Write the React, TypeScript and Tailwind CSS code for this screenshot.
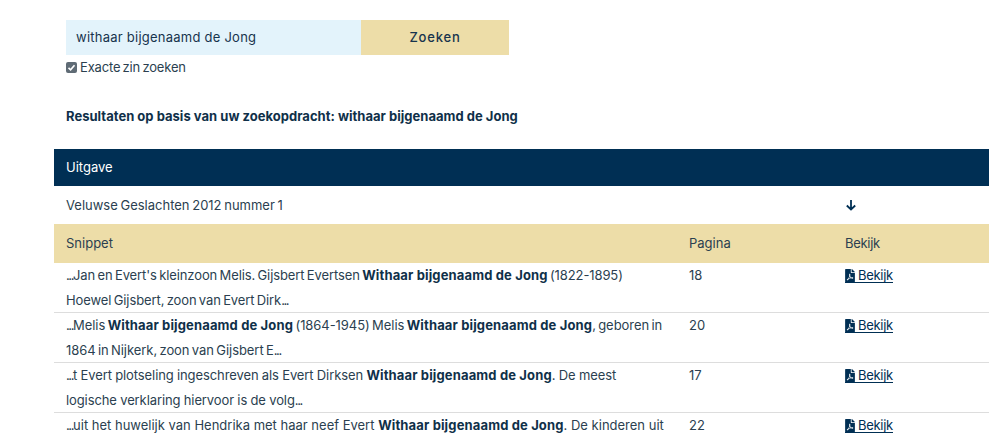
import React from "react";

const B = "Withaar bijgenaamd de Jong";

function Dots() {
  return <span className="tracking-[-1.4px]">...</span>;
}

function Name() {
  return <b className="font-bold text-[#0f3049] tracking-[0.14px] [word-spacing:0px]">{B}</b>;
}

function PdfIcon() {
  return (
    <svg viewBox="0 0 384 512" className="mr-[3px] h-[13px] w-[10px]" fill="#002f54">
      <path d="M181.9 256.1c-5-16-4.9-46.9-2-46.9 8.4 0 7.6 36.9 2 46.9zm-1.7 47.2c-7.7 20.2-17.3 43.3-28.4 62.7 18.3-7 39-17.2 62.9-21.9-12.7-9.6-24.9-23.4-34.5-40.8zM86.1 428.1c0 .8 13.2-5.4 34.9-40.2-6.7 6.3-29.1 24.5-34.9 40.2zM248 160h136v328c0 13.3-10.7 24-24 24H24c-13.3 0-24-10.7-24-24V24C0 10.7 10.7 0 24 0h200v136c0 13.2 10.8 24 24 24zm-8 171.8c-20-12.2-33.3-29-42.7-53.8 4.5-18.5 11.6-46.6 6.2-64.2-4.7-29.4-42.4-26.5-47.8-6.8-5 18.3-.4 44.1 8.1 77-11.6 27.6-28.7 64.6-40.8 85.8-.1 0-.1.1-.2.1-27.1 13.9-73.6 44.5-54.5 68 5.6 6.9 16 10 21.5 10 17.9 0 35.7-18 61.1-61.8 25.8-8.5 54.1-19.1 79-23.2 21.7 11.8 47.1 19.5 64 19.5 29.2 0 31.2-32 19.7-43.4-13.9-13.6-54.3-9.7-73.6-7.2zM377 105L279 7c-4.5-4.5-10.6-7-17-7h-6v128h128v-6.1c0-6.3-2.5-12.4-7-16.9z" />
    </svg>
  );
}

const rows: { content: React.ReactNode; page: string; fit: string }[] = [
  {
    page: "18",
    fit: "tracking-[-0.1px] [word-spacing:-1.2px]",
    content: (
      <>
        <Dots />Jan en Evert's kleinzoon Melis. Gijsbert Evertsen <Name /> (1822-1895)<br />
        Hoewel Gijsbert, zoon van Evert Dirk<Dots />
      </>
    ),
  },
  {
    page: "20",
    fit: "tracking-[-0.06px] [word-spacing:-1.2px]",
    content: (
      <>
        <Dots />Melis <Name /> (1864-1945) Melis <Name />, geboren in<br />
        1864 in Nijkerk, zoon van Gijsbert E<Dots />
      </>
    ),
  },
  {
    page: "17",
    fit: "tracking-[-0.1px] [word-spacing:-0.2px]",
    content: (
      <>
        <Dots />t Evert plotseling ingeschreven als Evert Dirksen <Name />. De meest<br />
        logische verklaring hiervoor is de volg<Dots />
      </>
    ),
  },
  {
    page: "22",
    fit: "tracking-[0px] [word-spacing:0px]",
    content: (
      <>
        <Dots />uit het huwelijk van Hendrika met haar neef Evert <Name />. De kinderen uit
      </>
    ),
  },
];

export default function App() {
  return (
    <div className="h-[441px] overflow-hidden bg-white text-[#2b3f50] text-[13px] leading-[25px] font-['Inter','Liberation_Sans',sans-serif]">
      <div className="pl-[66px] pt-[20px]">
        <div className="flex h-[35px] w-[443px]">
          <div className="flex-1 bg-[#e3f3fb] pl-[10px] leading-[35px] tracking-[0.24px] text-[#17344d]">withaar bijgenaamd de Jong</div>
          <div className="w-[148px] bg-[#eddda8] text-center leading-[35px] tracking-[0.8px] font-medium text-[#17344d]">Zoeken</div>
        </div>
        <label className="mt-[4px] flex h-[17px] items-center gap-[3px] leading-[17px] tracking-[-0.17px] [word-spacing:-1.2px]">
          <span className="flex h-[11px] w-[11px] items-center justify-center rounded-[2px] bg-[#5f6b75]">
            <svg viewBox="0 0 12 12" className="h-[9px] w-[9px]" fill="none" stroke="#fff" strokeWidth="2.2">
              <path d="M2 6.5l2.8 2.6L10 3" />
            </svg>
          </span>
          Exacte zin zoeken
        </label>
        <h2 className="mt-[32px] text-[13px] leading-[17px] font-bold tracking-[0.02px] text-[#0f3049]">
          Resultaten op basis van uw zoekopdracht: withaar bijgenaamd de Jong
        </h2>
      </div>

      <table className="mt-[24px] ml-[54px] w-[935px] table-fixed border-collapse text-left">
        <colgroup>
          <col className="w-[623px]" />
          <col className="w-[156px]" />
          <col className="w-[156px]" />
        </colgroup>
        <thead>
          <tr className="h-[37px] bg-[#002f54] text-white">
            <th colSpan={3} className="px-3 font-normal">Uitgave</th>
          </tr>
        </thead>
        <tbody>
          <tr className="h-[38px]">
            <td colSpan={2} className="px-3 [word-spacing:-1px]">Veluwse Geslachten 2012 nummer 1</td>
            <td className="px-3">
              <svg viewBox="0 0 12 12" className="h-[12px] w-[12px]" fill="none" stroke="#002f54" strokeWidth="1.8">
                <path d="M6 1v9.5M1.8 6.5L6 10.5l4.2-4" />
              </svg>
            </td>
          </tr>
          <tr className="h-[39px] bg-[#eddda8]">
            <td className="px-3">Snippet</td>
            <td className="px-3">Pagina</td>
            <td className="px-3 tracking-[-0.3px]">Bekijk</td>
          </tr>
          {rows.map((r) => (
            <tr key={r.page} className="border-b border-[#dddddd] align-top">
              <td className={"px-3 " + r.fit}>
                <div className="h-[49px] whitespace-nowrap">{r.content}</div>
              </td>
              <td className="px-3">{r.page}</td>
              <td className="px-3">
                <a className="mt-[5px] inline-flex items-center border-b border-[#002f54] leading-[14px] tracking-[-0.3px] text-[#002f54]">
                  <PdfIcon />Bekijk
                </a>
              </td>
            </tr>
          ))}
        </tbody>
      </table>
    </div>
  );
}
